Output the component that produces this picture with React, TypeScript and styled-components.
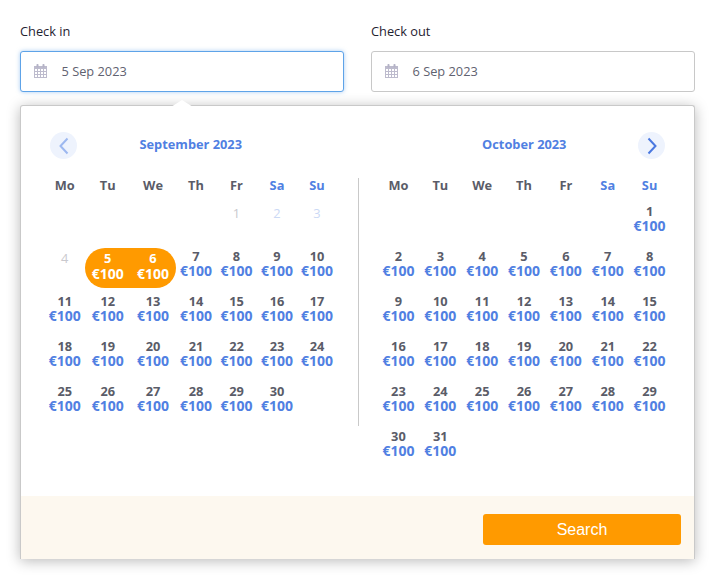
import React from "react";
import styled, { createGlobalStyle } from "styled-components";

const GlobalStyle = createGlobalStyle`
  html, body {
    margin: 0;
    padding: 0;
    background: #fff;
    font-family: "Open Sans", sans-serif;
  }
`;

const Page = styled.div`
  width: 716px;
  height: 578px;
  box-sizing: border-box;
  padding: 22px 21px 0 20px;
  overflow: hidden;
`;

const Fields = styled.div`
  display: grid;
  grid-template-columns: 324px 324px;
  column-gap: 27px;
`;

const Label = styled.div`
  font-size: 12.8px;
  line-height: 18px;
  color: #1f2230;
  margin-bottom: 11px;
`;

const Field = styled.div<{ $focused?: boolean }>`
  display: flex;
  align-items: center;
  box-sizing: border-box;
  height: 41px;
  padding: 0 0 2px 12.5px;
  background: #fff;
  border: 1px solid ${(p) => (p.$focused ? "#5ea3e8" : "#c8c8c8")};
  border-radius: 3px;
  box-shadow: ${(p) => (p.$focused ? "0 0 4px rgba(94, 163, 232, 0.55)" : "none")};
`;

const FieldValue = styled.span`
  margin-left: 15px;
  font-size: 12.8px;
  color: #5f6270;
`;

const Panel = styled.div`
  position: relative;
  box-sizing: border-box;
  width: 675px;
  height: 454px;
  margin-top: 13px;
  background: #fff;
  border: 1px solid #c9c9c9;
  border-bottom: none;
  border-radius: 3px 3px 0 0;
  box-shadow: 0 2px 14px rgba(0, 0, 0, 0.28);
  display: flex;
  flex-direction: column;
`;

const Arrow = styled.div`
  position: absolute;
  top: -6px;
  left: 150px;
  width: 0;
  height: 0;
  border-left: 11px solid transparent;
  border-right: 11px solid transparent;
  border-bottom: 7px solid #fff;
`;

const Months = styled.div`
  flex: 1;
  display: flex;
  padding: 26px 0 0 23px;
`;

const Divider = styled.div`
  width: 1px;
  height: 248px;
  margin: 46px 18.5px 0 21px;
  background: #c9c9c9;
`;

const MonthBox = styled.div`
  width: 293px;
`;

const MonthHeader = styled.div`
  display: grid;
  grid-template-columns: 1fr auto 1fr;
  align-items: center;
  height: 27px;
  padding: 0 5.5px 0 6px;
`;

const MonthTitle = styled.div`
  grid-column: 2;
  grid-row: 1;
  font-size: 12.8px;
  font-weight: 700;
  color: #5080e2;
  line-height: 25px;
  margin-bottom: 2px;
`;

const NavButton = styled.button<{ $side: "left" | "right"; $faded?: boolean }>`
  grid-column: ${(p) => (p.$side === "left" ? 1 : 3)};
  grid-row: 1;
  justify-self: ${(p) => (p.$side === "left" ? "start" : "end")};
  width: 27px;
  height: 27px;
  padding: 0;
  border: none;
  border-radius: 50%;
  background: #eef3fd;
  display: flex;
  align-items: center;
  justify-content: center;
  color: ${(p) => (p.$faded ? "#9db8f0" : "#4a78e0")};
`;

const DayGrid = styled.div<{ $columns: string }>`
  display: grid;
  grid-template-columns: ${(p) => p.$columns};
  grid-auto-rows: 45px;
  text-align: center;
`;

const WeekRow = styled.div<{ $columns: string }>`
  display: grid;
  grid-template-columns: ${(p) => p.$columns};
  height: 18px;
  margin: 17px 0 9px;
  text-align: center;
`;

const WeekDay = styled.div<{ $weekend?: boolean }>`
  font-size: 12.8px;
  font-weight: 700;
  line-height: 18px;
  color: ${(p) => (p.$weekend ? "#5080e2" : "#5a5c68")};
`;

const Cell = styled.div`
  padding-top: 1px;
  font-size: 12.8px;
  font-weight: 700;
  line-height: 14px;
  color: #5a5c68;
`;

const PastCell = styled.div<{ $weekend?: boolean }>`
  padding-top: 3px;
  font-size: 12.8px;
  line-height: 15px;
  color: ${(p) => (p.$weekend ? "#cbd9f5" : "#c9c9ce")};
`;

const SelectedCell = styled.div<{ $edge: "start" | "end" }>`
  box-sizing: border-box;
  height: 40px;
  padding-top: 3px;
  margin-left: ${(p) => (p.$edge === "start" ? "-1px" : "0")};
  padding-left: ${(p) => (p.$edge === "start" ? "1px" : "0")};
  background: #ff9a00;
  border-radius: ${(p) => (p.$edge === "start" ? "20px 0 0 20px" : "0 20px 20px 0")};
  font-size: 12.8px;
  font-weight: 700;
  line-height: 15px;
  color: #fff;
`;

const Price = styled.div`
  font-size: 14px;
  line-height: 15px;
  color: #5080e2;
`;

const SelectedPrice = styled.div`
  font-size: 14px;
  line-height: 16px;
  color: #fff;
`;

const Footer = styled.div`
  height: 63px;
  display: flex;
  justify-content: flex-end;
  align-items: flex-start;
  padding: 18px 13px 0 0;
  box-sizing: border-box;
  background: #fdf8ef;
`;

const SearchButton = styled.button`
  width: 198px;
  height: 31px;
  padding: 0;
  border: none;
  border-radius: 3px;
  background: #ff9a00;
  color: #fff;
  font-family: "Liberation Sans", Arial, sans-serif;
  font-size: 16px;
`;

function CalendarIcon() {
  return (
    <svg width="13" height="14" viewBox="0 0 13 14" fill="none">
      <rect x="0.5" y="2.5" width="12" height="11" fill="#fff" stroke="#bdbbcd" />
      <rect x="0" y="2" width="13" height="3" fill="#bdbbcd" />
      <rect x="2.5" y="0" width="2" height="3.5" rx="0.8" fill="#b4b2c6" />
      <rect x="8.5" y="0" width="2" height="3.5" rx="0.8" fill="#b4b2c6" />
      <path
        d="M3.5 5v8M6.5 5v8M9.5 5v8M1 7.5h11M1 10.5h11"
        stroke="#bdbbcd"
        strokeWidth="1"
      />
    </svg>
  );
}

function Chevron({ dir }: { dir: "left" | "right" }) {
  return (
    <svg width="12" height="18" viewBox="0 0 12 18" fill="none">
      <path
        d={dir === "left" ? "M9.5 1.5 L2.5 9 L9.5 16.5" : "M2.5 1.5 L9.5 9 L2.5 16.5"}
        stroke="currentColor"
        strokeWidth="2"
      />
    </svg>
  );
}

const WEEK = ["Mo", "Tu", "We", "Th", "Fr", "Sa", "Su"];

type Props = {
  title: string;
  columns: string;
  leading: number;
  days: number;
  past?: number;
  selected?: number[];
  nav: "left" | "right";
};

function Month({ title, columns, leading, days, past = 0, selected = [], nav }: Props) {
  const cells: React.ReactNode[] = [];
  for (let i = 0; i < leading; i++) cells.push(<div key={`e${i}`} />);
  for (let d = 1; d <= days; d++) {
    const weekend = (leading + d - 1) % 7 >= 5;
    if (d <= past) {
      cells.push(
        <PastCell key={d} $weekend={weekend}>
          {d}
        </PastCell>
      );
    } else if (selected.includes(d)) {
      cells.push(
        <SelectedCell key={d} $edge={d === selected[0] ? "start" : "end"}>
          {d}
          <SelectedPrice>€100</SelectedPrice>
        </SelectedCell>
      );
    } else {
      cells.push(
        <Cell key={d}>
          {d}
          <Price>€100</Price>
        </Cell>
      );
    }
  }

  return (
    <MonthBox>
      <MonthHeader>
        <NavButton $side={nav} $faded={nav === "left"}>
          <Chevron dir={nav} />
        </NavButton>
        <MonthTitle>{title}</MonthTitle>
      </MonthHeader>
      <WeekRow $columns={columns}>
        {WEEK.map((w, i) => (
          <WeekDay key={w} $weekend={i >= 5}>
            {w}
          </WeekDay>
        ))}
      </WeekRow>
      <DayGrid $columns={columns}>{cells}</DayGrid>
    </MonthBox>
  );
}

export default function App() {
  return (
    <Page>
      <GlobalStyle />
      <Fields>
        <div>
          <Label>Check in</Label>
          <Field $focused>
            <CalendarIcon />
            <FieldValue>5 Sep 2023</FieldValue>
          </Field>
        </div>
        <div>
          <Label>Check out</Label>
          <Field>
            <CalendarIcon />
            <FieldValue>6 Sep 2023</FieldValue>
          </Field>
        </div>
      </Fields>
      <Panel>
        <Arrow />
        <Months>
          <Month
            title="September 2023"
            columns="41.5px 44.5px 46px 40px 41px 40px 40px"
            leading={4}
            days={30}
            past={4}
            selected={[5, 6]}
            nav="left"
          />
          <Divider />
          <Month
            title="October 2023"
            columns="repeat(7, 41.86px)"
            leading={6}
            days={31}
            nav="right"
          />
        </Months>
        <Footer>
          <SearchButton>Search</SearchButton>
        </Footer>
      </Panel>
    </Page>
  );
}
